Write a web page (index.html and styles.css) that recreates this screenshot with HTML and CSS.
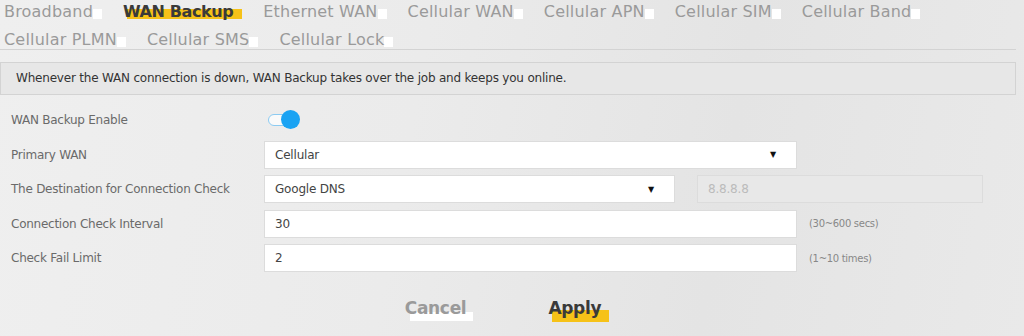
FILE: index.html
```html
<!DOCTYPE html>
<html lang="en">
<head>
  <meta charset="UTF-8" />
  <meta name="viewport" content="width=device-width, initial-scale=1.0" />
  <title>WAN Backup</title>
  <link rel="stylesheet" href="styles.css">
</head>
<body>
  <div class="page">
    <nav class="tabs">
      <a class="tab">Broadband</a>
      <a class="tab active">WAN Backup</a>
      <a class="tab">Ethernet WAN</a>
      <a class="tab">Cellular WAN</a>
      <a class="tab">Cellular APN</a>
      <a class="tab">Cellular SIM</a>
      <a class="tab">Cellular Band</a>
      <a class="tab">Cellular PLMN</a>
      <a class="tab">Cellular SMS</a>
      <a class="tab">Cellular Lock</a>
    </nav>

    <div class="info">Whenever the WAN connection is down, WAN Backup takes over the job and keeps you online.</div>

    <form class="form">
      <div class="row">
        <label>WAN Backup Enable</label>
        <span class="switch"><span class="knob"></span></span>
      </div>
      <div class="row">
        <label>Primary WAN</label>
        <div class="select wide"><span>Cellular</span><span class="caret">&#9660;</span></div>
      </div>
      <div class="row">
        <label>The Destination for Connection Check</label>
        <div class="select narrow"><span>Google DNS</span><span class="caret">&#9660;</span></div>
        <div class="field disabled">8.8.8.8</div>
      </div>
      <div class="row">
        <label>Connection Check Interval</label>
        <div class="field wide">30</div>
        <span class="hint">(30~600 secs)</span>
      </div>
      <div class="row">
        <label>Check Fail Limit</label>
        <div class="field wide">2</div>
        <span class="hint">(1~10 times)</span>
      </div>
    </form>

    <div class="buttons">
      <button type="button" class="btn cancel">Cancel</button>
      <button type="button" class="btn apply">Apply</button>
    </div>
  </div>
</body>
</html>
```

FILE: styles.css
```css
body {
  margin: 0;
  font-family: 'DejaVu Sans', sans-serif;
  background: linear-gradient(100deg, #efefef 0%, #ebebeb 40%, #e4e4e4 70%, #e9e9e9 100%);
  height: 336px;
  overflow: hidden;
}
.page {
  width: 1016px;
}
.tabs {
  display: flex;
  flex-wrap: wrap;
  column-gap: 21px;
  padding: 0 0 0 4px;
  height: 50px;
  border-bottom: 1px solid #d3d3d3;
  box-sizing: border-box;
  margin-bottom: 12px;
}
.tab {
  position: relative;
  z-index: 0;
  font-size: 16px;
  line-height: 24px;
  height: 28px;
  color: #9a9a9a;
  padding-right: 9px;
  letter-spacing: 0.2px;
}
.tab::after {
  content: "";
  position: absolute;
  right: 0;
  top: 9px;
  width: 9px;
  height: 10px;
  background: #fff;
  z-index: -1;
}
.tab.active {
  color: #3a3a3a;
  font-weight: bold;
  letter-spacing: -0.4px;
}
.tab.active::after {
  width: calc(100% - 4px);
  background: #f6c218;
}
.info {
  border: 1px solid #d3d3d3;
  background: #e7e7e7;
  height: 31px;
  line-height: 31px;
  padding-left: 15px;
  font-size: 12px;
  letter-spacing: -0.2px;
  color: #333;
  margin-bottom: 11px;
}
.form {
  display: flex;
  flex-direction: column;
  gap: 6.5px;
}
.row {
  display: flex;
  align-items: center;
  height: 28px;
}
.row label {
  width: 253px;
  padding-left: 11px;
  font-size: 12px;
  letter-spacing: -0.25px;
  color: #6a6a6a;
}
.switch {
  position: relative;
  width: 20px;
  height: 10px;
  margin-left: 4px;
  border: 1px solid #8ccbf2;
  border-radius: 6px;
  background: #fafafa;
}
.knob {
  position: absolute;
  right: -11px;
  top: -5px;
  width: 19px;
  height: 19px;
  border-radius: 50%;
  background: #1aa3f3;
}
.select, .field {
  box-sizing: border-box;
  height: 28px;
  background: #fff;
  border: 1px solid #dcdcdc;
  display: flex;
  align-items: center;
  justify-content: space-between;
  padding: 0 20px 0 10px;
  font-size: 12px;
  letter-spacing: -0.2px;
  color: #444;
}
.wide {
  width: 533px;
}
.narrow {
  width: 411px;
}
.caret {
  font-size: 8px;
  color: #111;
}
.field.disabled {
  width: 286px;
  margin-left: 22px;
  background: #e8e8e8;
  color: #bbb;
}
.hint {
  margin-left: 12px;
  font-size: 10px;
  letter-spacing: -0.3px;
  color: #888;
}
.buttons {
  display: flex;
  justify-content: center;
  gap: 78px;
  margin-top: 26px;
  padding-right: 6px;
}
.btn {
  position: relative;
  z-index: 0;
  border: none;
  background: none;
  font-family: 'DejaVu Sans', sans-serif;
  font-weight: bold;
  font-size: 17px;
  letter-spacing: -0.3px;
  padding: 0 4px 0 0;
  cursor: pointer;
}
.btn::after {
  content: "";
  position: absolute;
  z-index: -1;
}
.cancel {
  color: #9a9a9a;
}
.cancel::after {
  left: 5px;
  right: -3px;
  bottom: -3px;
  height: 9px;
  background: #fff;
}
.apply {
  color: #3a3a3a;
}
.apply::after {
  left: 4px;
  right: -4px;
  bottom: -4px;
  height: 12px;
  background: #f6c218;
}
```
